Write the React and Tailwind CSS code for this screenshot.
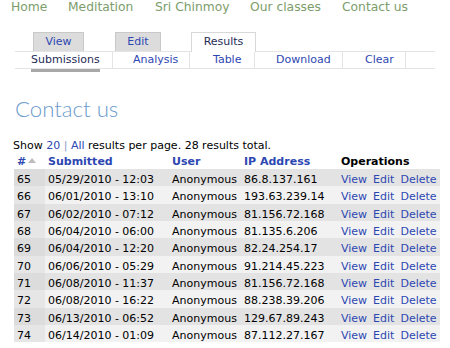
const navItems = [
  { label: "Home", cls: "w-[57px]" },
  { label: "Meditation", cls: "w-[87px]" },
  { label: "Sri Chinmoy", cls: "w-[95px]" },
  { label: "Our classes", cls: "w-[92px]" },
  { label: "Contact us", cls: "" },
];

const subTabs = [
  { label: "Submissions", cls: "w-[98px] pl-[16px] text-[#1f2b56]" },
  { label: "Analysis", cls: "w-[77px] pl-[20px] text-[#2d47b2]" },
  { label: "Table", cls: "w-[65px] pl-[23px] text-[#2d47b2]" },
  { label: "Download", cls: "w-[88px] pl-[21px] text-[#2d47b2]" },
  { label: "Clear", cls: "w-[63px] pl-[22px] text-[#2d47b2]" },
];

const rows = [
  ["65", "05/29/2010 - 12:03", "86.8.137.161"],
  ["66", "06/01/2010 - 13:10", "193.63.239.14"],
  ["67", "06/02/2010 - 07:12", "81.156.72.168"],
  ["68", "06/04/2010 - 06:00", "81.135.6.206"],
  ["69", "06/04/2010 - 12:20", "82.24.254.17"],
  ["70", "06/06/2010 - 05:29", "91.214.45.223"],
  ["71", "06/08/2010 - 11:37", "81.156.72.168"],
  ["72", "06/08/2010 - 16:22", "88.238.39.206"],
  ["73", "06/13/2010 - 06:52", "129.67.89.243"],
  ["74", "06/14/2010 - 01:09", "87.112.27.167"],
];

const SortArrow = () => (
  <svg width="8" height="5" viewBox="0 0 8 5" className="ml-[2px] mb-[3px]">
    <path d="M0 5 L4 0 L8 5 Z" fill="#bdbdbd" />
  </svg>
);

const App = () => {
  return (
    <div className="h-[348px] w-[450px] overflow-hidden bg-white font-['DejaVu_Sans',sans-serif] text-[11px] text-black">
      <nav className="flex h-[15px] pl-[11px] text-[12.3px] leading-[15px] text-[#7c9d6b]">
        {navItems.map((item) => (
          <span key={item.label} className={item.cls}>
            {item.label}
          </span>
        ))}
      </nav>

      <div className="mx-[15px] mt-[17px]">
        <div className="flex h-[19px] pl-[18px]">
          <span className="flex w-[51px] items-center justify-center border border-b-0 border-[#c9c9c9] bg-[#dcdcdc] text-[#2d47b2]">
            View
          </span>
          <span className="ml-[31px] flex w-[46px] items-center justify-center border border-b-0 border-[#c9c9c9] bg-[#dcdcdc] text-[#2d47b2]">
            Edit
          </span>
          <span className="relative z-10 ml-[30px] flex h-[20px] w-[65px] items-center justify-center border border-b-0 border-[#d8d8d8] bg-white text-[#1f2b56]">
            Results
          </span>
        </div>
        <div className="flex h-[18px] border-y border-[#e4e4e4] leading-[16px]">
          {subTabs.map((tab) => (
            <span key={tab.label} className={`border-r border-[#e4e4e4] ${tab.cls}`}>
              {tab.label}
            </span>
          ))}
        </div>
        <div className="ml-[16px] h-[3px] w-[69px] bg-[#a8a8a8]" />
      </div>

      <h1 className="mt-[23px] h-[28px] pl-[15px] font-['Lato',sans-serif] text-[22.2px] font-light leading-[28px] text-[#6c9bcd]">
        Contact us
      </h1>

      <p className="mt-[15px] h-[16px] pl-[13px] leading-[16px]">
        Show <span className="text-[#2d47b2]">20</span>{" "}
        <span className="text-[#8c9ac8]">|</span>{" "}
        <span className="text-[#2d47b2]">All</span> results per page. 28 results total.
      </p>

      <div className="ml-[14px] w-[426px]">
        <div className="flex h-[15px] items-end font-bold leading-[14px] text-[#2d47b2]">
          <span className="flex w-[31px] items-center pl-[3px]">
            #<SortArrow />
          </span>
          <span className="w-[124px] pl-[3px]">Submitted</span>
          <span className="w-[72px] pl-[3px]">User</span>
          <span className="w-[97px] pl-[3px]">IP Address</span>
          <span className="w-[102px] pl-[3px] text-black">Operations</span>
        </div>

        {rows.map(([id, date, ip], i) => {
          const odd = i % 2 === 0;
          return (
            <div
              key={id}
              className={`flex h-[17.33px] pt-[5px] leading-[12px] ${odd ? "bg-[#e3e3e3]" : "bg-[#f2f2f2]"}`}
            >
              <span
                className={`-mt-[5px] w-[31px] pl-[3px] pt-[5px] ${odd ? "bg-[#dcdcdc]" : "bg-[#e6e6e6]"}`}
              >
                {id}
              </span>
              <span className="w-[124px] pl-[3px]">{date}</span>
              <span className="w-[72px] pl-[3px]">Anonymous</span>
              <span className="w-[97px] pl-[3px]">{ip}</span>
              <span className="flex w-[102px] gap-[6px] pl-[3px] text-[#2d47b2]">
                <span>View</span>
                <span>Edit</span>
                <span>Delete</span>
              </span>
            </div>
          );
        })}
      </div>
    </div>
  );
};

export default App;
